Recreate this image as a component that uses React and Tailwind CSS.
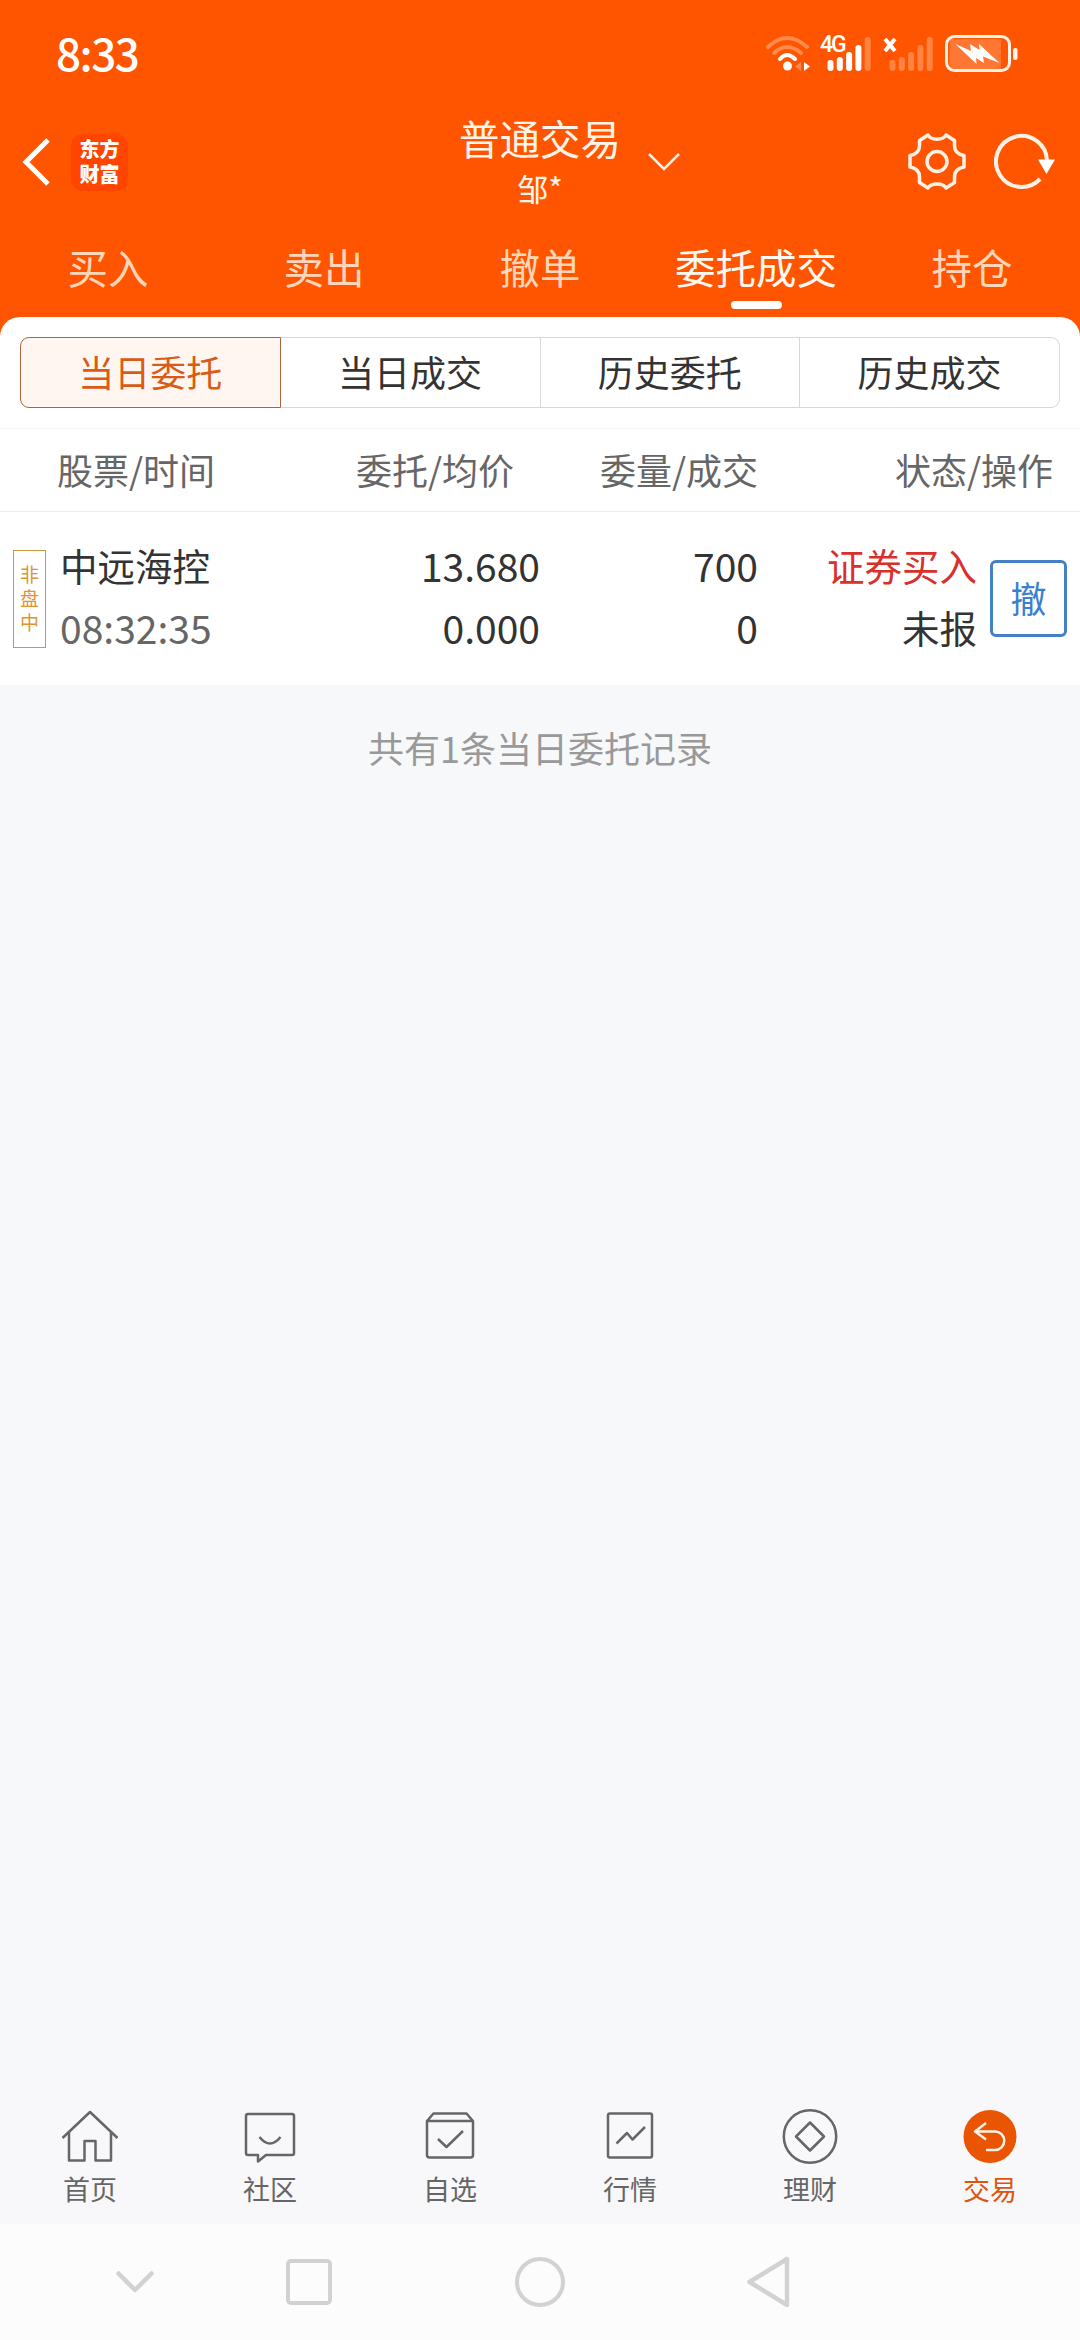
import { clsx } from "clsx"

const navTabs = ["买入", "卖出", "撤单", "委托成交", "持仓"]
const subTabs = ["当日委托", "当日成交", "历史委托", "历史成交"]

function WifiIcon() {
  return (
    <svg width="46" height="38" viewBox="0 0 46 38" fill="none" strokeLinecap="round">
      <path d="M3 12 Q22 -6 42 12" stroke="#ff8c4d" strokeWidth="4" />
      <path d="M9 18 Q22 6 36 18" stroke="#ff8c4d" strokeWidth="4" />
      <path d="M15 24 Q22 16 30 24" stroke="#fff" strokeWidth="4" />
      <circle cx="22.5" cy="31" r="4.5" fill="#fff" />
      <path d="M36 27v9l-6-4.5z" fill="#ff8c4d" />
      <path d="M39 27v9l6-4.5z" fill="#fff" />
    </svg>
  )
}

function SignalBars({ active }) {
  const heights = [11, 14, 19, 26, 34]
  return (
    <svg width="44" height="36" viewBox="0 0 44 36">
      {heights.map((h, i) => (
        <rect key={h} x={0.5 + i * 9.3} y={35 - h} width="6" height={h} rx="3" fill={i < active ? "#fff" : "#ff8442"} />
      ))}
    </svg>
  )
}

function BatteryIcon() {
  return (
    <svg width="73" height="38" viewBox="0 0 73 38" fill="none">
      <path d="M5 4h51v30H10a6 6 0 0 1-6-6z" fill="#ff7733" />
      <rect x="1.5" y="1.5" width="63" height="34" rx="8" stroke="#fff1e6" strokeWidth="3" />
      <rect x="68" y="13" width="4.5" height="12" rx="2" fill="#fff1e6" />
      <path d="M10.5 9L26 16l-1-7 9.500 6-.5-6L54.500 28 38 21.500l1 6.500-8-5 .5 6z" fill="#fff" />
    </svg>
  )
}

function StatusBar() {
  return (
    <div className="flex h-[108px] items-center justify-between pl-[56px] pr-[62px] text-white">
      <span className="pb-1 text-[44px] leading-none font-medium tracking-[-1.5px]">8:33</span>
      <div className="flex items-center">
        <WifiIcon />
        <div className="relative ml-4">
          <SignalBars active={4} />
          <span className="absolute -top-[3px] -left-[7px] font-['Roboto'] text-[23px] leading-none font-medium tracking-[-2px]">
            4G
          </span>
        </div>
        <div className="relative ml-[18px]">
          <SignalBars active={0} />
          <svg className="absolute top-[2px] -left-[6px]" width="14" height="14" viewBox="0 0 14 14">
            <path d="M2 1l10 12M12 1L2 13" stroke="#fff" strokeWidth="4" />
          </svg>
        </div>
        <div className="ml-3">
          <BatteryIcon />
        </div>
      </div>
    </div>
  )
}

function TitleBar() {
  return (
    <div className="grid h-[108px] grid-cols-[1fr_auto_1fr] items-center text-white">
      <div className="flex items-center pl-[22px]">
        <svg width="29" height="50" viewBox="0 0 29 50" fill="none">
          <path d="M26 3L4 25l22 22" stroke="#fff" strokeWidth="5" />
        </svg>
        <div className="ml-5 flex size-[57px] flex-col items-center justify-center rounded-[12px] bg-[#ff4500] pb-[2px] text-[20px] leading-[25px] font-black">
          <span className="h-[25px]">东方</span>
          <span className="h-[25px]">财富</span>
        </div>
      </div>
      <div className="relative flex flex-col items-center pb-1 text-[#fff4ea]">
        <span className="text-[40.5px] leading-[56px]">普通交易</span>
        <span className="text-[31px] leading-[44px]">邹*</span>
        <svg className="absolute top-[42px] left-[189px]" width="32" height="20" viewBox="0 0 32 20" fill="none">
          <path d="M1 2l15 15L31 2" stroke="#fff1e6" strokeWidth="2.5" />
        </svg>
      </div>
      <div className="flex items-center justify-end gap-[28px] pr-[25px]">
        <svg width="58" height="58" viewBox="0 0 58 58" fill="none" stroke="#fff1e6" strokeWidth="3.5" strokeLinejoin="round">
          <path d="M20 2C23 7.500 35 7.500 38 2L46.500 7.500V12.500C46.500 18 50 21.500 56 22.500V34C50 35 46.500 38.500 46.500 44V49.500L38 55C35 49.500 23 49.500 20 55L11.500 49.500V44C11.500 38.500 8 35 2 34V22.500C8 21.500 11.500 18 11.500 12.500V7.500Z" />
          <circle cx="29" cy="28.5" r="10" />
        </svg>
        <svg width="61" height="58" viewBox="0 0 61 58" fill="none">
          <path d="M46 46A25.500 25.500 0 1 1 53 28" stroke="#fff1e6" strokeWidth="4" />
          <path d="M44 26.5h17L52.5 41z" fill="#fff" />
        </svg>
      </div>
    </div>
  )
}

function NavTabs() {
  return (
    <div className="grid h-[101px] grid-cols-5 text-[40.5px]">
      {navTabs.map((tab) => {
        const active = tab === "委托成交"
        return (
          <div key={tab} className={clsx("flex flex-col items-center", active ? "text-[#fff8f0]" : "text-[#ffd6b8]")}>
            <span className="mt-[23px] leading-[56px]">{tab}</span>
            {active && <span className="mt-1.5 h-2 w-[51px] rounded-full bg-white" />}
          </div>
        )
      })}
    </div>
  )
}

function OrderPanel() {
  return (
    <div className="rounded-t-[20px] bg-white">
      <div className="px-5 pt-5">
        <div className="flex h-[71px] text-4xl text-[#333]">
          {subTabs.map((tab, i) => (
            <div
              key={tab}
              className={clsx(
                "flex flex-1 items-center justify-center border pb-[3px]",
                i === 0 ? "rounded-l-[9px] border-[#b0623a] bg-[#fff6f2] text-[#d95b16]" : "border-[#d5d7d8]",
                i > 0 && "border-l-0",
                i === 3 && "rounded-r-[9px]"
              )}
            >
              {tab}
            </div>
          ))}
        </div>
      </div>

      <div className="mt-5 flex h-[84px] items-center border-y border-t-[#f6f6f6] border-b-[#ececec] pb-[3px] text-4xl text-[#666]">
        <span className="w-[214px] pl-[57px] whitespace-nowrap">股票/时间</span>
        <span className="w-[300px] text-right">委托/均价</span>
        <span className="w-[244px] text-right">委量/成交</span>
        <span className="w-[295px] text-right">状态/操作</span>
      </div>

      <div className="flex h-[173px] items-center text-[37.5px] leading-[62px] text-[#333]">
        <div className="ml-[13px] flex h-[98px] w-[33px] flex-col items-center justify-center border border-[#c9993f] pb-[2px] text-[19px] leading-[24px] text-[#e09530]">
          <span>非</span>
          <span>盘</span>
          <span>中</span>
        </div>
        <div className="ml-[14px] flex w-[180px] flex-col pb-[5px]">
          <span>中远海控</span>
          <span className="text-[39px] text-[#666]">08:32:35</span>
        </div>
        <div className="flex w-[300px] flex-col pb-[5px] text-right text-[39px]">
          <span>13.680</span>
          <span>0.000</span>
        </div>
        <div className="flex w-[218px] flex-col pb-[5px] text-right text-[39px]">
          <span>700</span>
          <span>0</span>
        </div>
        <div className="flex w-[219px] flex-col pb-[5px] text-right">
          <span className="text-[#d9302c]">证券买入</span>
          <span>未报</span>
        </div>
        <button className="ml-[13px] flex size-[77px] items-center justify-center rounded-[6px] border-[3px] border-[#4480c4] pb-[3px] text-4xl text-[#3b7fce]">
          撤
        </button>
      </div>
    </div>
  )
}

const bottomItems = [
  {
    label: "首页",
    icon: (
      <>
        <path d="M2.500 31L30 5l27.500 26" />
        <path d="M9 25v28.500h15.500V34h11v19.500H51V25" />
      </>
    ),
  },
  {
    label: "社区",
    icon: (
      <>
        <path d="M8 7h44q2 0 2 2v37q0 2-2 2H26l-8 6.500V48H8q-2 0-2-2V9q0-2 2-2z" />
        <path d="M19.500 30q10.500 13 21 0" />
      </>
    ),
  },
  {
    label: "自选",
    icon: (
      <>
        <path d="M7 14L13.500 6.500h33L53 14V48q0 2.500-2.500 2.500h-41Q7 50.500 7 48zM7 14h46" />
        <path d="M18 32l8.500 8L43 24" />
      </>
    ),
  },
  {
    label: "行情",
    icon: (
      <>
        <rect x="8" y="6.5" width="44" height="44" rx="2" />
        <path d="M16.500 36.500L27 26l5.500 6.500L45 20" />
      </>
    ),
  },
  {
    label: "理财",
    icon: (
      <>
        <circle cx="30" cy="29.5" r="26.2" />
        <path d="M30 15.500l14 14-14 14-14-14z" />
      </>
    ),
  },
  {
    label: "交易",
    active: true,
    icon: (
      <>
        <circle cx="30" cy="29.5" r="26.5" fill="#ea5504" stroke="none" />
        <path d="M26 16L15 24.500l11 8M15 24.500h20a9.200 9.200 0 0 1 0 18.500h-9" stroke="#fff1e6" />
      </>
    ),
  },
]

function BottomBar() {
  return (
    <div className="grid h-[144px] grid-cols-6 bg-[#f8f8fa]">
      {bottomItems.map((item) => (
        <div key={item.label} className="flex flex-col items-center pt-[27px]">
          <svg width="60" height="60" viewBox="0 0 60 60" fill="none" stroke="#666" strokeWidth="2.5" strokeLinejoin="round">
            {item.icon}
          </svg>
          <span className={clsx("mt-0.5 text-[27px] leading-[40px]", item.active ? "text-[#dc560f]" : "text-[#666]")}>
            {item.label}
          </span>
        </div>
      ))}
    </div>
  )
}

function SystemNav() {
  return (
    <div className="flex h-[116px] items-center bg-[#fcfcfc] pl-[115px]">
      <svg width="40" height="50" viewBox="0 0 40 50" fill="none" stroke="#d2d2d2" strokeWidth="4.5" strokeLinecap="round" strokeLinejoin="round">
        <path d="M3.500 16.500L20 33l16.500-16.500" />
      </svg>
      <div className="ml-[131px] size-[46px] rounded-[5px] border-4 border-[#d2d2d2]" />
      <div className="ml-[183px] size-[50px] rounded-full border-4 border-[#d2d2d2]" />
      <svg className="ml-[182px]" width="44" height="52" viewBox="0 0 44 52" fill="none" stroke="#d2d2d2" strokeWidth="4.5" strokeLinejoin="round">
        <path d="M2.500 26L40 3v46z" />
      </svg>
    </div>
  )
}

export default function App() {
  return (
    <div className="flex h-[2340px] w-[1080px] flex-col overflow-hidden bg-[#f7f8fa] font-['Noto_Sans_CJK_SC',sans-serif]">
      <div className="bg-[#ff5500]">
        <StatusBar />
        <TitleBar />
        <NavTabs />
        <OrderPanel />
      </div>
      <p className="mt-[35px] text-center text-4xl leading-[54px] text-[#999]">共有1条当日委托记录</p>
      <div className="flex-1" />
      <BottomBar />
      <SystemNav />
    </div>
  )
}
